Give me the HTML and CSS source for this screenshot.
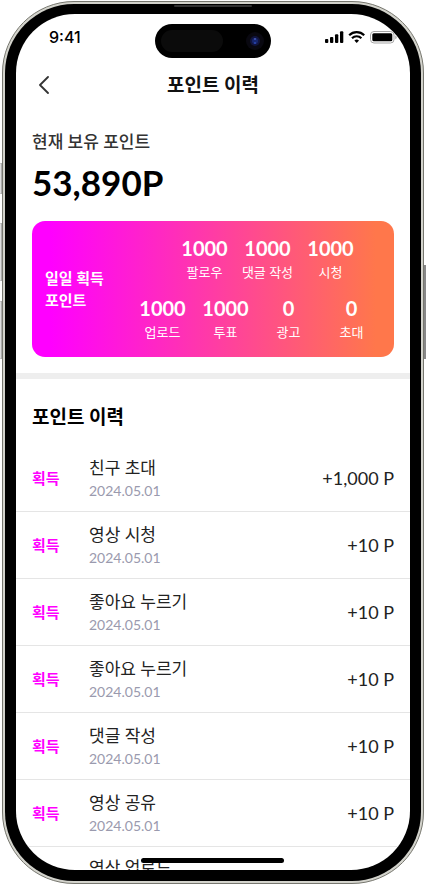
FILE: index.html
```html
<!DOCTYPE html>
<html lang="ko">
<head>
<meta charset="utf-8">
<meta name="viewport" content="width=device-width, initial-scale=1">
<title>포인트 이력</title>
<link rel="stylesheet" href="styles.css">
</head>
<body>
<div class="device">
  <span class="key key-action"></span>
  <span class="key key-up"></span>
  <span class="key key-down"></span>
  <span class="key key-power"></span>
  <div class="bezel">
    <span class="speaker"></span>
    <div class="screen">
      <div class="island"><span class="sensor"></span>
        <svg class="camera" viewBox="0 0 20 20" aria-hidden="true"><circle cx="10" cy="10" r="9" fill="#090810"/><circle cx="10" cy="10" r="5" fill="#11143d"/><circle cx="10" cy="10" r="3" fill="#16266e"/><circle cx="10" cy="8" r="1" fill="#4659b8"/><circle cx="10" cy="12" r="1" fill="#2c48b5"/></svg>
      </div>
      <div class="status">
        <time class="clock">9:41</time>
        <svg class="signals" viewBox="0 0 72 14" aria-hidden="true">
          <rect x="0" y="9" width="3.3" height="4" rx="1"/><rect x="5" y="7" width="3.3" height="6" rx="1"/><rect x="10" y="4.300" width="3.300" height="8.700" rx="1"/><rect x="15" y="1.300" width="3.300" height="11.700" rx="1"/>
          <g fill="none" stroke="#000" stroke-width="2.200"><path d="M24.200 5.200a10.600 10.600 0 0 1 15 0"/><path d="M27 8.200a6.700 6.700 0 0 1 9.400 0"/></g>
          <path d="M29.400 10.500a3.400 3.400 0 0 1 4.600 0L31.700 13z"/>
          <rect x="45.500" y="1.500" width="23.500" height="11.500" rx="3.500" fill="none" stroke="#a5a5a5"/>
          <rect x="47.300" y="3.200" width="20" height="8" rx="1.500"/>
          <path d="M70.400 5.500c1.600.6 1.600 3.200 0 3.800z" fill="#999"/>
        </svg>
      </div>
      <header class="nav">
        <button class="back" type="button" aria-label="뒤로">
          <svg viewBox="0 0 12 18" aria-hidden="true"><path d="M10 1 2 9l8 8" fill="none" stroke="#333" stroke-width="1.800" stroke-linecap="round" stroke-linejoin="round"/></svg>
        </button>
        <h1 class="title">포인트 이력</h1>
      </header>
      <main>
        <section class="balance">
          <p class="balance-label">현재 보유 포인트</p>
          <p class="balance-value">53,890P</p>
          <div class="card">
            <h2 class="card-title">일일 획득<br>포인트</h2>
            <div class="stats">
              <dl class="stat-row stat-row-short">
                <div class="stat"><dt>팔로우</dt><dd>1000</dd></div>
                <div class="stat"><dt>댓글 작성</dt><dd>1000</dd></div>
                <div class="stat"><dt>시청</dt><dd>1000</dd></div>
              </dl>
              <dl class="stat-row">
                <div class="stat"><dt>업로드</dt><dd>1000</dd></div>
                <div class="stat"><dt>투표</dt><dd>1000</dd></div>
                <div class="stat"><dt>광고</dt><dd>0</dd></div>
                <div class="stat"><dt>초대</dt><dd>0</dd></div>
              </dl>
            </div>
          </div>
        </section>
        <section class="history">
          <h2 class="title history-title">포인트 이력</h2>
          <ul class="list">
            <li class="item"><span class="kind">획득</span><div class="detail"><p class="name">친구 초대</p><time class="date">2024.05.01</time></div><span class="amount">+1,000 P</span></li>
            <li class="item"><span class="kind">획득</span><div class="detail"><p class="name">영상 시청</p><time class="date">2024.05.01</time></div><span class="amount">+10 P</span></li>
            <li class="item"><span class="kind">획득</span><div class="detail"><p class="name">좋아요 누르기</p><time class="date">2024.05.01</time></div><span class="amount">+10 P</span></li>
            <li class="item"><span class="kind">획득</span><div class="detail"><p class="name">좋아요 누르기</p><time class="date">2024.05.01</time></div><span class="amount">+10 P</span></li>
            <li class="item"><span class="kind">획득</span><div class="detail"><p class="name">댓글 작성</p><time class="date">2024.05.01</time></div><span class="amount">+10 P</span></li>
            <li class="item"><span class="kind">획득</span><div class="detail"><p class="name">영상 공유</p><time class="date">2024.05.01</time></div><span class="amount">+10 P</span></li>
            <li class="item"><div class="detail detail-last"><p class="name">영상 업로드</p></div></li>
          </ul>
        </section>
      </main>
      <span class="home"></span>
    </div>
  </div>
</div>
</body>
</html>
```
FILE: styles.css
```css
* { box-sizing: border-box; margin: 0; padding: 0; }

body {
  height: 100vh;
  padding: 1px 2px 0 2px;
  background: #fff;
  color: #222;
  font-family: Lato, "Noto Sans CJK KR", sans-serif;
  overflow: hidden;
}

/* Device frame */
.device {
  position: relative;
  height: 100%;
  padding: 2px;
  border: 1px solid #77776f;
  border-radius: 72px;
  background: #d3d3cc;
}
.bezel {
  position: relative;
  height: 100%;
  padding: 10px 11px 11px;
  border-radius: 69px;
  background: #000;
}
.screen {
  position: relative;
  height: 100%;
  border-radius: 59px;
  background: #fff;
  overflow: hidden;
}
.key {
  position: absolute;
  left: -3px;
  width: 2px;
  border: 1px solid #aaa;
  border-left-color: #ddd;
  background: #ddd;
}
.key-action { top: 161px; height: 31px; }
.key-up { top: 221px; height: 58px; }
.key-down { top: 299px; height: 58px; }
.key-power { top: 263px; right: -3px; left: auto; height: 94px; border-color: #888; }
.speaker {
  position: absolute;
  top: 1px;
  left: 50%;
  width: 78px;
  height: 2px;
  margin-left: -39px;
  border-radius: 1px;
  background: #333;
}
.island {
  position: absolute;
  top: 10px;
  left: 50%;
  display: flex;
  align-items: center;
  justify-content: space-between;
  width: 116px;
  height: 34px;
  margin-left: -58px;
  padding: 0 6px;
  border-radius: 17px;
  background: #000;
}
.sensor { width: 62px; height: 22px; border-radius: 11px; background: #0b0b0b; }
.camera { width: 20px; height: 20px; }
.home {
  position: absolute;
  bottom: 7px;
  left: 50%;
  width: 143px;
  height: 5px;
  margin-left: -72px;
  border-radius: 3px;
  background: #000;
}

/* Top bars */
.status {
  display: flex;
  align-items: center;
  justify-content: space-between;
  height: 46px;
  padding: 0 13px 0 33px;
}
.clock { font: 500 16px/20px Inter, sans-serif; color: #000; }
.signals { width: 72px; height: 14px; }
.nav {
  display: flex;
  align-items: center;
  justify-content: center;
  position: relative;
  height: 50px;
}
.back {
  position: absolute;
  left: 16px;
  display: flex;
  align-items: center;
  justify-content: center;
  width: 24px;
  height: 32px;
  border: 0;
  background: none;
}
.back svg { width: 12px; height: 18px; }
.title { color: #111; font-size: 19px; font-weight: 700; line-height: 28px; }

/* Balance */
.balance { padding: 18px 16px 16px; border-bottom: 6px solid #eee; }
.balance-label { color: #333; font-size: 17px; font-weight: 500; line-height: 28px; }
.balance-value { color: #000; font-size: 35px; font-weight: 700; line-height: 52px; }
.card {
  display: flex;
  align-items: center;
  justify-content: space-between;
  margin-top: 13px;
  padding: 13px 11px 13px 13px;
  border-radius: 13px;
  background: linear-gradient(90deg, #f0f 5%, #ff774b 95%);
  color: #fff;
}
.card-title { font-size: 15px; font-weight: 700; line-height: 22px; }
.stats { display: grid; gap: 10px; }
.stat-row { display: flex; justify-content: flex-end; }
.stat-row-short { padding-right: 21px; }
.stat { display: flex; flex-direction: column-reverse; width: 63px; text-align: center; }
.stat dt { font-size: 13px; line-height: 20px; padding-bottom: 2px; white-space: nowrap; }
.stat dd { font-size: 20px; font-weight: 700; line-height: 28px; }

/* History */
.history-title { padding: 24px 16px 14px; color: #000; }
.list { list-style: none; }
.item {
  display: flex;
  align-items: center;
  height: 67px;
  padding: 0 16px;
  border-bottom: 1px solid #e5e5e5;
}
.kind { width: 57px; color: #f0f; font-size: 15px; font-weight: 700; line-height: 24px; }
.detail { flex: 1; }
.detail-last { align-self: flex-start; padding: 8px 0 0 57px; }
.name { font-size: 17px; line-height: 26px; }
.date { display: block; color: #9a9aae; font-size: 14px; line-height: 20px; }
.amount { font-size: 18px; line-height: 26px; }
```
